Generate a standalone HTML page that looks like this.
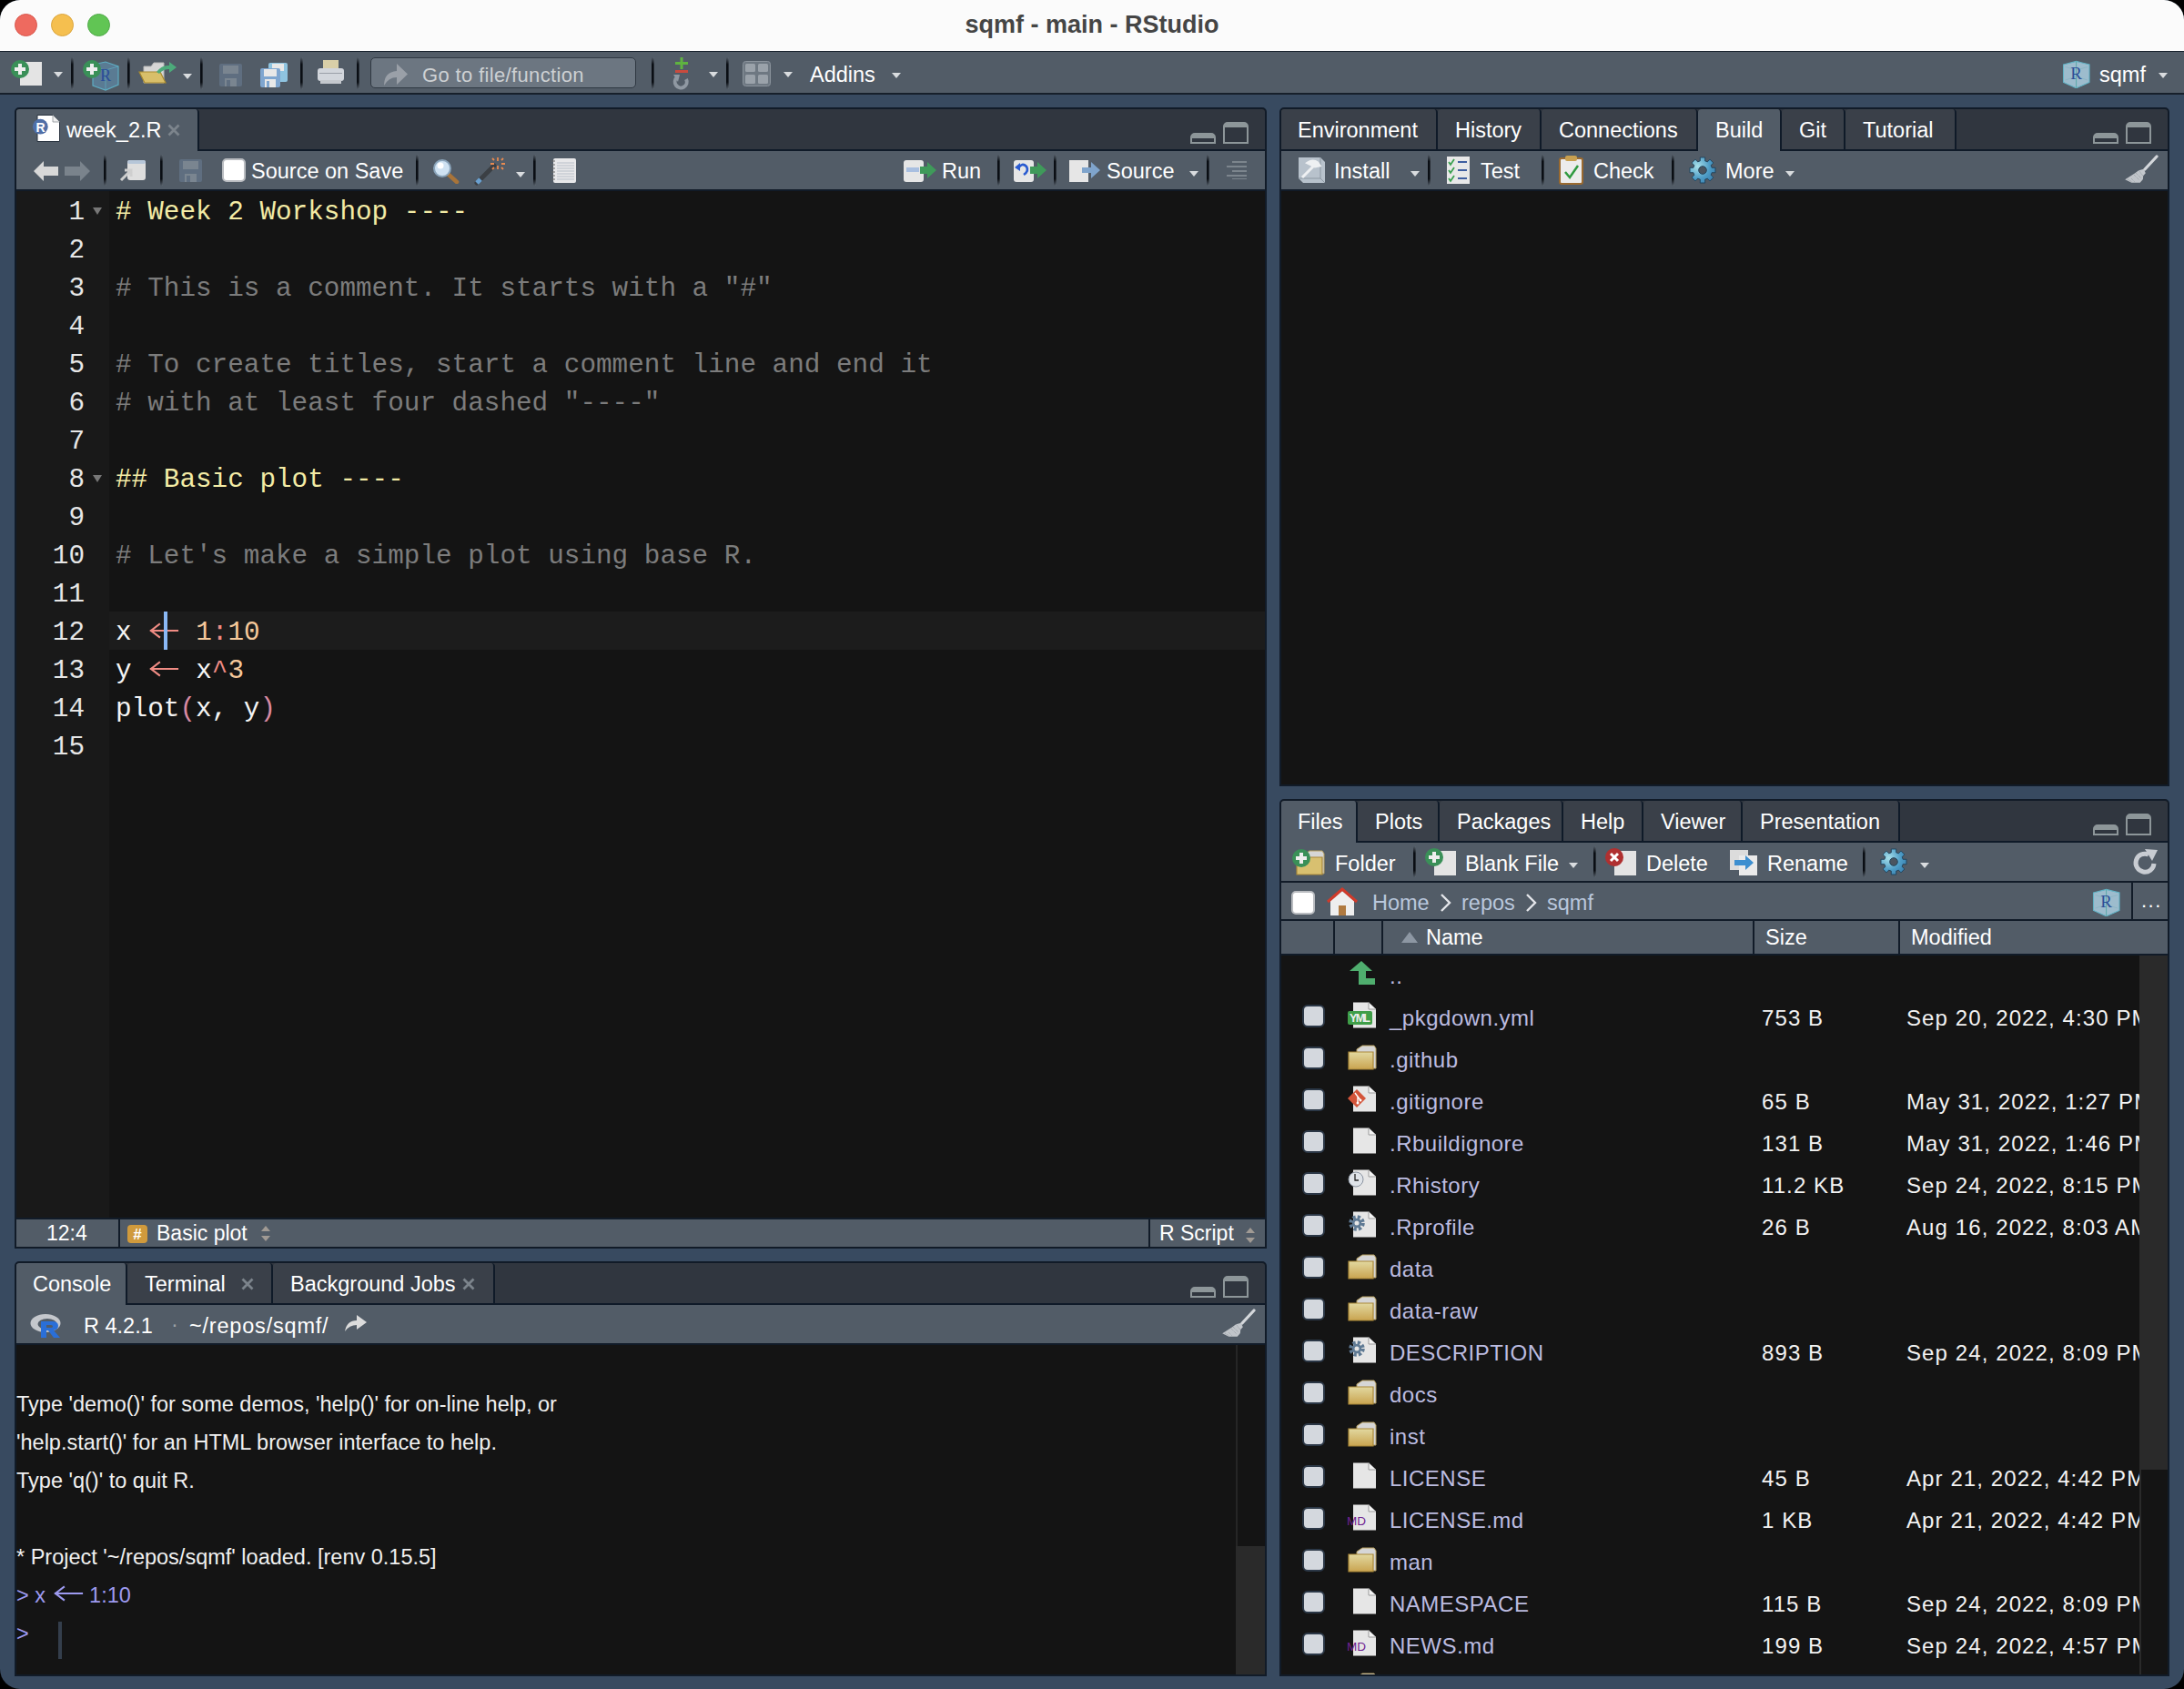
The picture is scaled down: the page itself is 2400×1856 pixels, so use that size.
<!DOCTYPE html>
<html><head><meta charset="utf-8">
<style>
*{margin:0;padding:0;box-sizing:border-box}
html,body{width:2400px;height:1856px;overflow:hidden;background:#000}
body{font-family:"Liberation Sans",sans-serif;font-size:23.5px;color:#fff}
.a{position:absolute}
#win{position:absolute;left:0;top:0;width:2400px;height:1856px;border-radius:22px;overflow:hidden;background:#384a60}
#title{left:0;top:0;width:2400px;height:56px;background:#fbfbfb}
#title .t{left:0;width:2400px;top:12px;text-align:center;font-weight:bold;font-size:27px;color:#454545}
.tl{width:25px;height:25px;border-radius:50%;top:15px}
#tb{left:0;top:56px;width:2400px;height:48px;background:#525c67;border-top:1.5px solid #17202b;border-bottom:2px solid #17202b}
.pane{border:2px solid #111b28;border-radius:5px 5px 0 0;overflow:hidden;background:#141414}
.tabbar{left:0;top:0;right:0;height:46px;background:#30363f;border-bottom:2px solid #0f1a28}
.tab{top:0;height:44px;background:#3a4049;border-radius:4px 4px 0 0;border-right:2px solid #0f1a28;color:#fff;line-height:46px;padding-left:19px;white-space:nowrap}
.tab.act{background:#525c67;height:46px;z-index:2}
.tool{left:0;right:0;background:#525c67;white-space:nowrap}
.sep{width:3px;background:linear-gradient(to bottom,rgba(10,14,20,0) 0%,#0a0e14 22%,#0a0e14 78%,rgba(10,14,20,0) 100%);border-right:1px solid rgba(120,130,140,0.25)}
.tx{white-space:nowrap;color:#fff}
.mono{font-family:"Liberation Mono",monospace}
.dd{width:0;height:0;border-left:5.5px solid transparent;border-right:5.5px solid transparent;border-top:6px solid #d9dcdf;margin-top:1px}
.ln{margin-top:3px;left:0;width:75px;text-align:right;font-family:"Liberation Mono",monospace;font-size:29.33px;line-height:42px;color:#e6e6e6}
.fold{left:84px;width:0;height:0;border-left:5.5px solid transparent;border-right:5.5px solid transparent;border-top:8px solid #777}
.code{margin-top:3px;left:109px;font-family:"Liberation Mono",monospace;font-size:29.33px;line-height:42px;color:#f4f4f4;white-space:pre}
.hd{color:#f3eba5}.cm{color:#7c7c7c}.nu{color:#f5c89a}.op{color:#f08c84}.pa{color:#d98aa3}
.minmax{width:86px;height:30px}
.minmax:before{box-sizing:border-box;content:"";position:absolute;left:0;top:12px;width:28px;height:12px;border:2px solid #8d9699;border-top-width:6px;border-radius:5px 5px 0 0}
.minmax:after{box-sizing:border-box;content:"";position:absolute;left:36px;top:0;width:28px;height:24px;border:2px solid #8d9699;border-top-width:6px;border-radius:5px 5px 0 0}
..code{margin-top:3px;left:12px;font-family:"Liberation Mono",monospace;font-size:29.33px;line-height:42px;white-space:pre}
.cb{width:25px;height:25px;background:#d4d8de;border:2px solid #2b3746;border-radius:6px}
.fn{font-size:24px;letter-spacing:0.5px;color:#bcbce0;white-space:nowrap;line-height:30px}
.fs{letter-spacing:1.1px;font-size:24px;color:#f2f2f2;white-space:nowrap;line-height:28px}
</style></head><body>
<div id="win">
  <div id="title" class="a">
    <div class="a tl" style="left:16px;background:#ee6a5f;border:1px solid #d9574d"></div>
    <div class="a tl" style="left:56px;background:#f5bf4f;border:1px solid #dba53f"></div>
    <div class="a tl" style="left:96px;background:#61c554;border:1px solid #51a94a"></div>
    <div class="a t">sqmf - main - RStudio</div>
  </div>
  <div id="tb" class="a">
    <!-- new file -->
    <svg class="a" style="left:10px;top:8px" width="40" height="32" viewBox="0 0 40 32">
      <rect x="12" y="3" width="24" height="26" fill="#e4e4e4"/>
      <circle cx="12" cy="11" r="10" fill="#3a9058"/>
      <rect x="6" y="9" width="12" height="4" fill="#eee"/><rect x="10" y="5" width="4" height="12" fill="#eee"/>
    </svg>
    <div class="a dd" style="left:59px;top:21px"></div>
    <div class="a sep" style="left:78px;top:6px;height:35px"></div>
    <!-- new project -->
    <svg class="a" style="left:90px;top:8px" width="42" height="36" viewBox="0 0 42 36">
      <path d="M12 6 L26 3 L40 8 L40 28 L26 34 L12 29 Z" fill="#5b7f98" stroke="#5fb5cc" stroke-width="1.2" opacity="0.9"/>
      <path d="M12 9 L26 12 L40 8 M26 12 L26 34" stroke="#5fb5cc" stroke-width="1" fill="none" opacity="0.6"/>
      <text x="20" y="24" font-family="Liberation Serif" font-size="18" fill="#2a4e9a">R</text>
      <circle cx="11" cy="11" r="10" fill="#3a9058"/>
      <rect x="5" y="9" width="12" height="4" fill="#eee"/><rect x="9" y="5" width="4" height="12" fill="#eee"/>
    </svg>
    <div class="a sep" style="left:140px;top:6px;height:35px"></div>
    <!-- open -->
    <svg class="a" style="left:152px;top:10px" width="44" height="28" viewBox="0 0 44 28">
      <path d="M6 6 L14 6 L17 2 L28 2 L28 24 L6 24 Z" fill="#d6d6d6" stroke="#b9b9b9" stroke-width="1"/>
      <path d="M1 12 L24 12 L30 24 L7 24 Z" fill="#d8bf6a" stroke="#a88a30" stroke-width="1.2"/>
      <path d="M20 12 Q26 4 34 5 L34 1 L42 7 L34 13 L34 9 Q27 9 23 14 Z" fill="#4caa7a"/>
    </svg>
    <div class="a dd" style="left:201px;top:23px"></div>
    <div class="a sep" style="left:220px;top:6px;height:35px"></div>
    <!-- save disabled -->
    <svg class="a" style="left:241px;top:13px" width="25" height="25" viewBox="0 0 25 25">
      <rect x="0" y="0" width="25" height="25" rx="2" fill="#5f6e80"/>
      <rect x="4" y="2" width="17" height="9" fill="#7a8590"/>
      <rect x="6" y="16" width="13" height="9" fill="#7a8590"/><rect x="8" y="18" width="4" height="7" fill="#5f6e80"/>
    </svg>
    <!-- save all -->
    <svg class="a" style="left:286px;top:11px" width="31" height="28" viewBox="0 0 31 28">
      <rect x="9" y="1" width="21" height="21" rx="2" fill="#8fc4e0"/>
      <rect x="13" y="2" width="13" height="8" fill="#e8e8e8"/>
      <rect x="0" y="7" width="22" height="21" rx="2" fill="#7fa6d0"/>
      <rect x="4" y="8" width="14" height="8" fill="#e8e8e8"/>
      <rect x="5" y="19" width="12" height="9" fill="#e8e8e8"/><rect x="7" y="21" width="3" height="7" fill="#7fa6d0"/>
    </svg>
    <div class="a sep" style="left:330px;top:6px;height:35px"></div>
    <!-- print -->
    <svg class="a" style="left:349px;top:9px" width="30" height="28" viewBox="0 0 30 28">
      <rect x="6" y="0" width="17" height="14" fill="#d9cfa8"/>
      <rect x="0" y="9" width="29" height="14" rx="3" fill="#d2d6dc"/>
      <rect x="3" y="22" width="23" height="4" fill="#c4c8cd"/>
      <rect x="2" y="14" width="25" height="1" fill="#9aa0a8"/>
    </svg>
    <div class="a sep" style="left:392px;top:6px;height:35px"></div>
    <!-- goto -->
    <div class="a" style="left:407px;top:6px;width:292px;height:34px;background:#6c7681;border:1.5px solid #2f3842;border-radius:5px"></div>
    <svg class="a" style="left:421px;top:12px" width="28" height="26" viewBox="0 0 28 26"><path d="M1 25 Q1 10 15 9 L15 1 L27 12.5 L15 24 L15 16 Q6 16 1 25 Z" fill="#9aa0a8"/></svg>
    <div class="a tx" style="left:464px;top:13px;color:#cdd0d3;font-size:22px;letter-spacing:0.35px">Go to file/function</div>
    <div class="a sep" style="left:716px;top:6px;height:35px"></div>
    <!-- git -->
    <svg class="a" style="left:738px;top:6px" width="22" height="36" viewBox="0 0 22 36">
      <rect x="4" y="5" width="14" height="3" fill="#5fb340"/><rect x="9.5" y="0" width="3" height="13" fill="#5fb340"/>
      <rect x="4" y="14" width="14" height="3" fill="#c84b3e"/>
      <path d="M16 24 A6.5 6.5 0 1 1 6 22" stroke="#8f98a2" stroke-width="4" fill="none"/>
      <path d="M2 19 L9 19 L7 27 Z" fill="#8f98a2"/>
    </svg>
    <div class="a dd" style="left:779px;top:21px"></div>
    <div class="a sep" style="left:798px;top:6px;height:35px"></div>
    <!-- grid -->
    <svg class="a" style="left:816px;top:10px" width="31" height="28" viewBox="0 0 31 28">
      <rect x="0.5" y="0.5" width="30" height="27" rx="3" fill="#6e7882" stroke="#8a939c"/>
      <rect x="3" y="3" width="11" height="9" rx="1.5" fill="#9aa2aa"/><rect x="17" y="3" width="11" height="9" rx="1.5" fill="#9aa2aa"/>
      <rect x="3" y="15" width="11" height="10" rx="1.5" fill="#9aa2aa"/><rect x="17" y="15" width="11" height="10" rx="1.5" fill="#9aa2aa"/>
    </svg>
    <div class="a dd" style="left:861px;top:21px"></div>
    <div class="a tx" style="left:890px;top:12px;font-size:23.5px">Addins</div>
    <div class="a dd" style="left:980px;top:22px"></div>
    <!-- right: project -->
    <svg class="a" style="left:2266px;top:8px" width="32" height="32" viewBox="0 0 32 32">
      <path d="M1.5 6 L15.6 2.4 L30 6 L30 25.5 L15.6 31.8 L1.5 25.5 Z" fill="#9dbccd" stroke="#62b3c6" stroke-width="1.1"/><path d="M15.6 2.4 L15.6 31.8" stroke="#5aa8a8" stroke-width="1"/><path d="M3.5 8.5 L15.6 12 L28 8.5 M3.5 23 L15.6 19 L28 23" stroke="#7fb0bf" stroke-width="0.8" fill="none" opacity="0.7"/><text x="9.2" y="21.5" font-family="Liberation Serif" font-size="19" fill="#2c4f96">R</text>
    </svg>
    <div class="a tx" style="left:2307px;top:12px;font-size:23.5px">sqmf</div>
    <div class="a dd" style="left:2372px;top:22px"></div>
  </div>

  <!-- SOURCE PANE -->
  <div id="src" class="a pane" style="left:16px;top:118px;width:1376px;height:1254px">
    <div class="a tabbar"></div>
    <div class="a tab act" style="left:-1px;width:202px">
      <svg class="a" style="left:18px;top:6px" width="34" height="32" viewBox="0 0 34 32">
        <path d="M6 0.5 L23 0.5 L30.5 8 L30.5 29.5 L6 29.5 Z" fill="#fff" stroke="#2a3440" stroke-width="1"/><path d="M23 0.5 L23 8 L30.5 8" fill="#f0f0f0" stroke="#8a8f96" stroke-width="0.8"/>
        <circle cx="9.3" cy="13.2" r="8.4" fill="#4f6fa8"/><text x="4.6" y="18.6" font-family="Liberation Sans" font-weight="bold" font-size="14" fill="#fff">R</text>
      </svg>
      <span class="a tx" style="left:56px;top:0">week_2.R</span>
      <svg class="a" style="left:167px;top:16px" width="14" height="14" viewBox="0 0 14 14"><path d="M1.5 1.5 L12.5 12.5 M12.5 1.5 L1.5 12.5" stroke="#7c848c" stroke-width="2.8"/></svg>
    </div>
    <div class="a minmax" style="left:1290px;top:14px"></div>
    <div class="a tool" style="top:46px;height:42px">
      <svg class="a" style="left:18px;top:10px" width="66" height="24" viewBox="0 0 66 24">
        <path d="M1 12 L12 1 L12 7 L28 7 L28 17 L12 17 L12 23 Z" fill="#d8d8d8"/>
        <path d="M63 12 L52 1 L52 7 L35 7 L35 17 L52 17 L52 23 Z" fill="#7a838c"/>
      </svg>
      <div class="a sep" style="left:96px;top:4px;height:34px"></div>
      <svg class="a" style="left:113px;top:10px" width="30" height="24" viewBox="0 0 30 24">
        <rect x="9" y="0" width="20" height="22" rx="3" fill="#dedede"/><rect x="9" y="0" width="20" height="4" rx="2" fill="#b6c6d8"/>
        <path d="M2 22 L12 12 M6 11 L13 11 L13 18" stroke="#cfcfcf" stroke-width="3" fill="none"/>
      </svg>
      <div class="a sep" style="left:158px;top:4px;height:34px"></div>
      <svg class="a" style="left:179px;top:9px" width="25" height="25" viewBox="0 0 25 25">
        <rect x="0" y="0" width="25" height="25" rx="2" fill="#5f6e80"/>
        <rect x="4" y="2" width="17" height="9" fill="#7a8590"/>
        <rect x="6" y="16" width="13" height="9" fill="#7a8590"/><rect x="8" y="18" width="4" height="7" fill="#5f6e80"/>
      </svg>
      <div class="a" style="left:226px;top:8px;width:26px;height:26px;background:#fff;border:2px solid #b9bcc0;border-radius:5px"></div>
      <span class="a tx" style="left:258px;top:9px">Source on Save</span>
      <div class="a sep" style="left:439px;top:4px;height:34px"></div>
      <svg class="a" style="left:457px;top:8px" width="30" height="28" viewBox="0 0 30 28">
        <path d="M16 16 L27 26" stroke="#a8743a" stroke-width="4.5" stroke-linecap="round"/>
        <circle cx="11" cy="11" r="9" fill="#cfe2f2" stroke="#8aa4ba" stroke-width="2"/>
        <circle cx="9" cy="8" r="3.5" fill="#fff"/>
      </svg>
      <svg class="a" style="left:503px;top:6px" width="36" height="32" viewBox="0 0 36 32">
        <path d="M3 29 L22 10" stroke="#3b3f44" stroke-width="5" stroke-linecap="round"/>
        <path d="M3 29 L7 25" stroke="#6aa0d0" stroke-width="5"/>
        <path d="M26 1 L26 5 M26 10 L26 14 M18 8 L22 8 M30 8 L34 8 M20 2 L22 4 M32 2 L30 4 M20 14 L22 12 M32 14 L30 12" stroke="#e88a50" stroke-width="1.8"/>
      </svg>
      <div class="a dd" style="left:549px;top:22px"></div>
      <div class="a sep" style="left:568px;top:4px;height:34px"></div>
      <svg class="a" style="left:587px;top:7px" width="30" height="30" viewBox="0 0 30 30">
        <rect x="3" y="1" width="25" height="27" rx="2" fill="#e8e8ea"/>
        <path d="M7 6 H26 M7 9 H26 M7 12 H26 M7 15 H26 M7 18 H26 M7 21 H26 M7 24 H26" stroke="#b8bfc8" stroke-width="1"/>
        <path d="M1 4 H5 M1 8 H5 M1 12 H5 M1 16 H5 M1 20 H5 M1 24 H5" stroke="#666" stroke-width="1.2"/>
      </svg>
      <!-- run -->
      <svg class="a" style="left:974px;top:9px" width="40" height="26" viewBox="0 0 40 26">
        <rect x="1" y="1" width="22" height="24" rx="3" fill="#e6e6e6"/>
        <rect x="4" y="9" width="14" height="5" fill="#a9bfe0"/>
        <path d="M19 8 L27 8 L27 3 L37 12 L27 21 L27 16 L19 16 Z" fill="#3f9a5a"/>
      </svg>
      <span class="a tx" style="left:1017px;top:9px">Run</span>
      <div class="a sep" style="left:1078px;top:4px;height:34px"></div>
      <svg class="a" style="left:1095px;top:9px" width="40" height="26" viewBox="0 0 40 26">
        <rect x="1" y="1" width="22" height="24" rx="3" fill="#e6e6e6"/>
        <path d="M6 10 Q10 3 15 8 Q18 13 12 17" stroke="#2a5bd0" stroke-width="2.6" fill="none"/><path d="M2 9 L8 4 L8 13 Z" fill="#2a5bd0"/>
        <path d="M19 8 L27 8 L27 3 L37 12 L27 21 L27 16 L19 16 Z" fill="#3f9a5a"/>
      </svg>
      <div class="a sep" style="left:1140px;top:4px;height:34px"></div>
      <svg class="a" style="left:1156px;top:9px" width="40" height="26" viewBox="0 0 40 26">
        <rect x="1" y="1" width="21" height="24" fill="#e6e6e6"/>
        <path d="M15 9 L25 9 L25 3 L35 12 L25 21 L25 15 L15 15 Z" fill="#7fa4cc"/>
      </svg>
      <span class="a tx" style="left:1198px;top:9px">Source</span>
      <div class="a dd" style="left:1289px;top:21px"></div>
      <div class="a sep" style="left:1308px;top:4px;height:34px"></div>
      <svg class="a" style="left:1330px;top:11px" width="24" height="20" viewBox="0 0 24 20">
        <path d="M6 1 H22 M0 6 H22 M6 11 H22 M0 16 H22 M6 20 H22" stroke="#8a939b" stroke-width="1.6"/>
      </svg>
    </div>
    <div class="a" style="left:0;top:88px;width:1376px;height:2px;background:#111b28"></div>
    <div class="a" style="left:0;top:90px;width:102px;height:1128px;background:#191919"></div>
    <div class="a" style="left:102px;top:552px;width:1270px;height:42px;background:#1c1c1c"></div>
        <div class="a ln" style="top:90px">1</div>
<div class="a fold" style="top:108px"></div>
<div class="a code" style="top:90px"><span class="hd"># Week 2 Workshop ----</span></div>
<div class="a ln" style="top:132px">2</div>
<div class="a ln" style="top:174px">3</div>
<div class="a code" style="top:174px"><span class="cm"># This is a comment. It starts with a "#"</span></div>
<div class="a ln" style="top:216px">4</div>
<div class="a ln" style="top:258px">5</div>
<div class="a code" style="top:258px"><span class="cm"># To create titles, start a comment line and end it</span></div>
<div class="a ln" style="top:300px">6</div>
<div class="a code" style="top:300px"><span class="cm"># with at least four dashed "----"</span></div>
<div class="a ln" style="top:342px">7</div>
<div class="a ln" style="top:384px">8</div>
<div class="a fold" style="top:402px"></div>
<div class="a code" style="top:384px"><span class="hd">## Basic plot ----</span></div>
<div class="a ln" style="top:426px">9</div>
<div class="a ln" style="top:468px">10</div>
<div class="a code" style="top:468px"><span class="cm"># Let's make a simple plot using base R.</span></div>
<div class="a ln" style="top:510px">11</div>
<div class="a ln" style="top:552px">12</div>
<div class="a code" style="top:552px">x <svg width="35" height="20" viewBox="0 0 35 20" style="vertical-align:0.5px;margin:0 0.2px"><path d="M4 10 H33 M13 3 L4 10 L13 17" stroke="#f08c84" stroke-width="2.2" fill="none" stroke-linecap="square"/></svg> <span class="nu">1</span><span class="op">:</span><span class="nu">10</span></div>
<div class="a ln" style="top:594px">13</div>
<div class="a code" style="top:594px">y <svg width="35" height="20" viewBox="0 0 35 20" style="vertical-align:0.5px;margin:0 0.2px"><path d="M4 10 H33 M13 3 L4 10 L13 17" stroke="#f08c84" stroke-width="2.2" fill="none" stroke-linecap="square"/></svg> x<span class="op">^</span><span class="nu">3</span></div>
<div class="a ln" style="top:636px">14</div>
<div class="a code" style="top:636px">plot<span class="pa">(</span>x, y<span class="pa">)</span></div>
<div class="a ln" style="top:678px">15</div>
    <div class="a" style="left:162px;top:552px;width:4px;height:42px;background:#8ab8f5"></div>
    <div class="a" style="left:0;top:1218px;width:1376px;height:2px;background:#111b28"></div>
    <div class="a tool" style="top:1220px;height:30px">
      <span class="a tx" style="left:33px;top:2px;font-size:23px">12:4</span>
      <div class="a" style="left:112px;top:0;width:2px;height:30px;background:#111b28"></div>
      <div class="a" style="left:122px;top:6px;width:22px;height:20px;background:#d09a3c;border-radius:4px;color:#fff;font-size:17px;line-height:21px;text-align:center;font-weight:bold">#</div>
      <span class="a tx" style="left:154px;top:2px;font-size:23px">Basic plot</span>
      <svg class="a" style="left:268px;top:6px" width="12" height="20" viewBox="0 0 12 20"><path d="M1 7 L6 1 L11 7 Z M1 12 L6 18 L11 12 Z" fill="#a09a94"/></svg>
      <div class="a" style="left:1244px;top:0;width:2px;height:30px;background:#111b28"></div>
      <span class="a tx" style="left:1256px;top:2px;font-size:23px">R Script</span>
      <svg class="a" style="left:1350px;top:8px" width="12" height="20" viewBox="0 0 12 20"><path d="M1 7 L6 1 L11 7 Z M1 12 L6 18 L11 12 Z" fill="#a09a94"/></svg>
    </div>
  </div>

  <!-- CONSOLE PANE -->
  <div id="con" class="a pane" style="left:16px;top:1386px;width:1376px;height:456px">
    <div class="a tabbar"></div>
    <div class="a tab act" style="left:-1px;width:123px">Console</div>
    <div class="a tab" style="left:122px;width:160px">Terminal<svg class="a" style="left:125px;top:16px" width="14" height="14" viewBox="0 0 14 14"><path d="M1.5 1.5 L12.5 12.5 M12.5 1.5 L1.5 12.5" stroke="#7c848c" stroke-width="2.8"/></svg></div>
    <div class="a tab" style="left:282px;width:244px">Background Jobs<svg class="a" style="left:208px;top:16px" width="14" height="14" viewBox="0 0 14 14"><path d="M1.5 1.5 L12.5 12.5 M12.5 1.5 L1.5 12.5" stroke="#7c848c" stroke-width="2.8"/></svg></div>
    <div class="a minmax" style="left:1290px;top:14px"></div>
    <div class="a tool" style="top:46px;height:42px">
      <svg class="a" style="left:15px;top:9px" width="36" height="28" viewBox="0 0 36 28">
        <ellipse cx="17" cy="11" rx="16.5" ry="10" fill="#c4c7cc"/>
        <ellipse cx="19" cy="12" rx="10.5" ry="6" fill="#525c67"/>
        <path d="M12 9 L24 9 Q31 9 31 14 Q31 18 26 19 L33 27 L26 27 L20 19 L18 19 L18 27 L12 27 Z M18 13 L18 16 L23 16 Q25 16 25 14.5 Q25 13 23 13 Z" fill="#2a6fd8"/>
      </svg>
      <span class="a tx" style="left:74px;top:10px">R 4.2.1</span>
      <span class="a" style="left:170px;top:8px;color:#9aa0a6">&#183;</span>
      <span class="a tx" style="left:190px;top:10px;letter-spacing:0.8px">~/repos/sqmf/</span>
      <svg class="a" style="left:360px;top:10px" width="26" height="22" viewBox="0 0 26 22">
        <path d="M1 19 Q3 7 14 7 L14 1 L25 9 L14 17 L14 12 Q6 12 1 19 Z" fill="#dcdcdc"/>
      </svg>
      <svg class="a" style="left:1324px;top:4px" width="40" height="34" viewBox="0 0 40 34"><path d="M36 2 L23 16" stroke="#d4d7db" stroke-width="3.2" stroke-linecap="round"/>
        <path d="M16.2 17.3 L21.8 15.8 L23.8 20.2 L21.2 23.2 Z" fill="#c4c8cd"/>
        <path d="M11.8 20.5 L16.2 17.3 L21.2 23.2 L20.9 27 L17.7 30.8 L8.3 30.8 L1.2 27.3 Z" fill="#c0c4c9"/>
        <path d="M13 20 L19 26 M11 22 L17 28 M4 27 L9 30 M8 26 L12 30" stroke="#8e959c" stroke-width="0.8" stroke-dasharray="1 1"/></svg>
    </div>
    <div class="a" style="left:0;top:88px;width:1376px;height:2px;background:#111b28"></div>
    <div class="a" style="left:1340px;top:90px;width:2px;height:222px;background:#262626"></div>
    <div class="a" style="left:1340px;top:311px;width:32px;height:141px;background:#2a2a2a"></div>
    <div class="a" style="left:0;top:90px;width:1341px;height:366px;overflow:hidden">
    <div class="a ccode" style="top:-32px;color:#f0f0f0">'citation()' on how to cite R or R packages in publications.</div>
<div class="a ccode" style="top:52px;color:#f0f0f0">Type 'demo()' for some demos, 'help()' for on-line help, or</div>
<div class="a ccode" style="top:94px;color:#f0f0f0">'help.start()' for an HTML browser interface to help.</div>
<div class="a ccode" style="top:136px;color:#f0f0f0">Type 'q()' to quit R.</div>
<div class="a ccode" style="top:220px;color:#f0f0f0">* Project '~/repos/sqmf' loaded. [renv 0.15.5]</div>
<div class="a ccode" style="top:262px;color:#9d9af0">&gt; x <svg width="35" height="20" viewBox="0 0 35 20" style="vertical-align:0.5px"><path d="M4 10 H33 M13 3 L4 10 L13 17" stroke="#9d9af0" stroke-width="2.2" fill="none" stroke-linecap="square"/></svg> 1:10</div>
<div class="a ccode" style="top:304px;color:#9d9af0">&gt; </div>
<div class="a" style="left:46px;top:304px;width:4px;height:41px;background:#343e4c"></div>
    </div>
  </div>

  <!-- ENV PANE -->
  <div id="env" class="a pane" style="left:1406px;top:118px;width:978px;height:746px">
    <div class="a tabbar"></div>
    <div class="a tab" style="left:-1px;width:173px">Environment</div>
    <div class="a tab" style="left:172px;width:114px">History</div>
    <div class="a tab" style="left:286px;width:172px">Connections</div>
    <div class="a tab act" style="left:458px;width:92px">Build</div>
    <div class="a tab" style="left:550px;width:70px">Git</div>
    <div class="a tab" style="left:620px;width:122px">Tutorial</div>
    <div class="a minmax" style="left:892px;top:14px"></div>
    <div class="a tool" style="top:46px;height:42px">
      <svg class="a" style="left:15px;top:4px" width="36" height="34" viewBox="0 0 36 34">
        <path d="M4 3 L28 3 L33 8 L33 31 L9 31 L4 26 Z" fill="#b8c2cc"/><path d="M28 3 L28 26 L33 31 M4 26 L28 26" stroke="#8c97a2" fill="none"/>
        <path d="M8 25 L20 13 M14 9 Q20 5 25 9 L27 12 L22 13 Z" stroke="#eef0f2" stroke-width="3" fill="#eef0f2"/>
      </svg>
      <span class="a tx" style="left:58px;top:9px">Install</span>
      <div class="a dd" style="left:142px;top:21px"></div>
      <div class="a sep" style="left:161px;top:4px;height:34px"></div>
      <svg class="a" style="left:182px;top:6px" width="26" height="30" viewBox="0 0 26 30">
        <rect x="0" y="0" width="25" height="30" fill="#e8e8e8"/>
        <path d="M2 6 L4 9 L8 3 M2 15 L4 18 L8 12 M2 24 L4 27 L8 21" stroke="#3aa050" stroke-width="1.8" fill="none"/>
        <path d="M12 6 H22 M12 15 H22 M12 24 H22" stroke="#3f5fa0" stroke-width="2"/>
      </svg>
      <span class="a tx" style="left:219px;top:9px">Test</span>
      <div class="a sep" style="left:286px;top:4px;height:34px"></div>
      <svg class="a" style="left:305px;top:3px" width="28" height="34" viewBox="0 0 28 34">
        <rect x="1" y="5" width="25" height="28" rx="2" fill="#ececec" stroke="#9a6a30" stroke-width="2"/>
        <rect x="7" y="2" width="13" height="6" rx="2" fill="#c8a050"/>
        <path d="M7 20 L12 26 L21 13" stroke="#2f9a40" stroke-width="2.5" fill="none"/>
      </svg>
      <span class="a tx" style="left:343px;top:9px">Check</span>
      <div class="a sep" style="left:429px;top:4px;height:34px"></div>
      <svg class="a" style="left:448px;top:6px" width="30" height="30" viewBox="0 0 30 30"><defs><radialGradient id="GG0" cx="0.3" cy="0.35" r="0.8"><stop offset="0" stop-color="#a8e0ea"/><stop offset="0.6" stop-color="#4d9cc6"/><stop offset="1" stop-color="#3a7fae"/></radialGradient></defs><path d="M24.70 10.98 L25.14 12.28 L29.04 12.27 L29.04 17.73 L25.14 17.72 L24.70 19.02 L24.09 20.25 L26.86 23.00 L23.00 26.86 L20.25 24.09 L19.02 24.70 L17.72 25.14 L17.73 29.04 L12.27 29.04 L12.28 25.14 L10.98 24.70 L9.75 24.09 L7.00 26.86 L3.14 23.00 L5.91 20.25 L5.30 19.02 L4.86 17.72 L0.96 17.73 L0.96 12.27 L4.86 12.28 L5.30 10.98 L5.91 9.75 L3.14 7.00 L7.00 3.14 L9.75 5.91 L10.98 5.30 L12.28 4.86 L12.27 0.96 L17.73 0.96 L17.72 4.86 L19.02 5.30 L20.25 5.91 L23.00 3.14 L26.86 7.00 L24.09 9.75 Z" fill="url(#GG0)" stroke="#23465e" stroke-width="1" stroke-linejoin="round"/><circle cx="15" cy="15" r="4.3" fill="#4a5560" stroke="#23465e" stroke-width="1"/></svg>
      <span class="a tx" style="left:488px;top:9px">More</span>
      <div class="a dd" style="left:554px;top:21px"></div>
      <svg class="a" style="left:926px;top:4px" width="40" height="34" viewBox="0 0 40 34"><path d="M36 2 L23 16" stroke="#d4d7db" stroke-width="3.2" stroke-linecap="round"/>
        <path d="M16.2 17.3 L21.8 15.8 L23.8 20.2 L21.2 23.2 Z" fill="#c4c8cd"/>
        <path d="M11.8 20.5 L16.2 17.3 L21.2 23.2 L20.9 27 L17.7 30.8 L8.3 30.8 L1.2 27.3 Z" fill="#c0c4c9"/>
        <path d="M13 20 L19 26 M11 22 L17 28 M4 27 L9 30 M8 26 L12 30" stroke="#8e959c" stroke-width="0.8" stroke-dasharray="1 1"/></svg>
    </div>
    <div class="a" style="left:0;top:88px;width:979px;height:2px;background:#111b28"></div>
  </div>

  <!-- FILES PANE -->
  <div id="files" class="a pane" style="left:1406px;top:878px;width:978px;height:964px">
    <div class="a tabbar"></div>
    <div class="a tab act" style="left:-1px;width:85px">Files</div>
    <div class="a tab" style="left:84px;width:90px">Plots</div>
    <div class="a tab" style="left:174px;width:136px">Packages</div>
    <div class="a tab" style="left:310px;width:88px">Help</div>
    <div class="a tab" style="left:398px;width:109px">Viewer</div>
    <div class="a tab" style="left:507px;width:173px">Presentation</div>
    <div class="a minmax" style="left:892px;top:14px"></div>
    <div class="a tool" style="top:46px;height:42px">
      <svg class="a" style="left:11px;top:6px" width="40" height="30" viewBox="0 0 40 30">
        <path d="M14 7 L20 3 L34 3 L36 6 L36 28 L14 28 Z" fill="#d6d6d6" stroke="#b8a060"/>
        <path d="M6 10 L34 10 L34 29 L6 29 Z" fill="#d8c070" stroke="#a98838" stroke-width="1.2"/>
        <circle cx="11" cy="11" r="10" fill="#3a9058"/><rect x="5" y="9" width="12" height="4" fill="#eee"/><rect x="9" y="5" width="4" height="12" fill="#eee"/>
      </svg>
      <span class="a tx" style="left:59px;top:10px">Folder</span>
      <div class="a sep" style="left:145px;top:4px;height:34px"></div>
      <svg class="a" style="left:158px;top:6px" width="36" height="30" viewBox="0 0 36 30">
        <rect x="10" y="3" width="24" height="27" fill="#e4e4e4"/><circle cx="10" cy="10" r="10" fill="#3a9058"/><rect x="4" y="8" width="12" height="4" fill="#eee"/><rect x="8" y="4" width="4" height="12" fill="#eee"/>
      </svg>
      <span class="a tx" style="left:202px;top:10px">Blank File</span>
      <div class="a dd" style="left:316px;top:21px"></div>
      <div class="a sep" style="left:343px;top:4px;height:34px"></div>
      <svg class="a" style="left:356px;top:6px" width="36" height="30" viewBox="0 0 36 30">
        <rect x="10" y="3" width="24" height="27" fill="#e4e4e4"/>
        <circle cx="10" cy="10" r="10" fill="#b03030"/><path d="M6 6 L14 14 M14 6 L6 14" stroke="#fff" stroke-width="3"/>
      </svg>
      <span class="a tx" style="left:401px;top:10px">Delete</span>
      <svg class="a" style="left:492px;top:7px" width="34" height="30" viewBox="0 0 34 30">
        <rect x="1" y="1" width="20" height="22" fill="#dcdcdc"/><rect x="11" y="7" width="20" height="22" fill="#eaeaea"/>
        <path d="M6 12 L18 12 L18 7 L27 15 L18 23 L18 18 L6 18 Z" fill="#3d8fd0"/>
      </svg>
      <span class="a tx" style="left:534px;top:10px">Rename</span>
      <div class="a sep" style="left:639px;top:4px;height:34px"></div>
      <svg class="a" style="left:658px;top:6px" width="30" height="30" viewBox="0 0 30 30"><defs><radialGradient id="GG1" cx="0.3" cy="0.35" r="0.8"><stop offset="0" stop-color="#a8e0ea"/><stop offset="0.6" stop-color="#4d9cc6"/><stop offset="1" stop-color="#3a7fae"/></radialGradient></defs><path d="M24.70 10.98 L25.14 12.28 L29.04 12.27 L29.04 17.73 L25.14 17.72 L24.70 19.02 L24.09 20.25 L26.86 23.00 L23.00 26.86 L20.25 24.09 L19.02 24.70 L17.72 25.14 L17.73 29.04 L12.27 29.04 L12.28 25.14 L10.98 24.70 L9.75 24.09 L7.00 26.86 L3.14 23.00 L5.91 20.25 L5.30 19.02 L4.86 17.72 L0.96 17.73 L0.96 12.27 L4.86 12.28 L5.30 10.98 L5.91 9.75 L3.14 7.00 L7.00 3.14 L9.75 5.91 L10.98 5.30 L12.28 4.86 L12.27 0.96 L17.73 0.96 L17.72 4.86 L19.02 5.30 L20.25 5.91 L23.00 3.14 L26.86 7.00 L24.09 9.75 Z" fill="url(#GG1)" stroke="#23465e" stroke-width="1" stroke-linejoin="round"/><circle cx="15" cy="15" r="4.3" fill="#4a5560" stroke="#23465e" stroke-width="1"/></svg>
      <div class="a dd" style="left:702px;top:21px"></div>
      <svg class="a" style="left:935px;top:7px" width="30" height="30" viewBox="0 0 30 30">
        <path d="M24 16 A10 10 0 1 1 18 6" stroke="#c8ccd2" stroke-width="5" fill="none"/>
        <path d="M14 0 L28 1 L22 13 Z" fill="#c8ccd2"/>
      </svg>
    </div>
    <div class="a" style="left:0;top:88px;width:979px;height:2px;background:#111b28"></div>
    <div class="a tool" style="top:90px;height:40px">
      <div class="a" style="left:11px;top:9px;width:26px;height:26px;background:#fff;border:2px solid #b9bcc0;border-radius:5px"></div>
      <svg class="a" style="left:49px;top:5px" width="36" height="32" viewBox="0 0 36 32">
        <path d="M5 15 L18 4 L31 15 L31 31 L5 31 Z" fill="#eeeeee"/>
        <rect x="14" y="20" width="8" height="11" fill="#b07a40"/>
        <path d="M2 16 L18 2 L34 16" stroke="#d03a2a" stroke-width="3" fill="none"/>
      </svg>
      <span class="a tx" style="left:100px;top:9px;color:#b9c7dc">Home</span>
      <svg class="a" style="left:174px;top:11px" width="14" height="22" viewBox="0 0 14 22"><path d="M2 2 L11 11 L2 20" stroke="#e4e6ea" stroke-width="2.4" fill="none"/></svg>
      <span class="a tx" style="left:198px;top:9px;color:#b9c7dc">repos</span>
      <svg class="a" style="left:268px;top:11px" width="14" height="22" viewBox="0 0 14 22"><path d="M2 2 L11 11 L2 20" stroke="#e4e6ea" stroke-width="2.4" fill="none"/></svg>
      <span class="a tx" style="left:292px;top:9px;color:#b9c7dc">sqmf</span>
      <svg class="a" style="left:891px;top:5px" width="32" height="32" viewBox="0 0 32 32"><path d="M1.5 6 L15.6 2.4 L30 6 L30 25.5 L15.6 31.8 L1.5 25.5 Z" fill="#9dbccd" stroke="#62b3c6" stroke-width="1.1"/><path d="M15.6 2.4 L15.6 31.8" stroke="#5aa8a8" stroke-width="1"/><path d="M3.5 8.5 L15.6 12 L28 8.5 M3.5 23 L15.6 19 L28 23" stroke="#7fb0bf" stroke-width="0.8" fill="none" opacity="0.7"/><text x="9.2" y="21.5" font-family="Liberation Serif" font-size="19" fill="#2c4f96">R</text></svg>
      <div class="a" style="left:934px;top:0;width:2px;height:40px;background:#111b28"></div>
      <span class="a tx" style="left:945px;top:7px;font-size:22px;letter-spacing:1.5px">...</span>
    </div>
    <div class="a" style="left:0;top:130px;width:979px;height:2px;background:#111b28"></div>
    <div class="a tool" style="top:132px;height:36px">
      <div class="a" style="left:57px;top:0;width:2px;height:36px;background:#111b28"></div>
      <div class="a" style="left:110px;top:0;width:2px;height:36px;background:#111b28"></div>
      <div class="a" style="left:518px;top:0;width:2px;height:36px;background:#111b28"></div>
      <div class="a" style="left:678px;top:0;width:2px;height:36px;background:#111b28"></div>
      <svg class="a" style="left:131px;top:11px" width="20" height="14" viewBox="0 0 20 14"><path d="M10 1 L19 13 L1 13 Z" fill="#8d97a3"/></svg>
      <span class="a tx" style="left:159px;top:5px">Name</span>
      <span class="a tx" style="left:532px;top:5px">Size</span>
      <span class="a tx" style="left:692px;top:5px">Modified</span>
    </div>
    <div class="a" style="left:0;top:168px;width:979px;height:2px;background:#111b28"></div>
    <div class="a" style="left:0;top:170px;width:943px;height:792px;overflow:hidden">
      <svg class="a" style="left:73px;top:5px;overflow:visible" width="32" height="30" viewBox="0 0 32 30"><path d="M15 1 L27 12 L20 12 L20 20 L30 20 L30 27 L12 27 L12 12 L2 12 Z" fill="#4fae6e"/></svg>
<div class="a fn" style="left:119px;top:8px">..</div>
<div class="a cb" style="left:23px;top:54px"></div>
<svg class="a" style="left:73px;top:51px;overflow:visible" width="32" height="30" viewBox="0 0 32 30"><path d="M6 0.5 L23 0.5 L31 8 L31 28.5 L6 28.5 Z" fill="#e6e6e6"/><path d="M23 0.5 L23 8 L31 8" fill="#f4f4f4" stroke="#9a9a9a" stroke-width="1"/><rect x="0" y="10" width="27" height="15" rx="2" fill="#3f9e48"/><text x="2" y="22" font-family="Liberation Sans" font-weight="bold" font-size="12.5" fill="#eee" textLength="23">YML</text></svg>
<div class="a fn" style="left:119px;top:54px">_pkgdown.yml</div>
<div class="a fs" style="left:528px;top:55px">753 B</div>
<div class="a fs" style="left:687px;top:55px">Sep 20, 2022, 4:30 PM</div>
<div class="a cb" style="left:23px;top:100px"></div>
<svg class="a" style="left:73px;top:97px;overflow:visible" width="32" height="30" viewBox="0 0 32 30"><defs><linearGradient id="fg" x1="0" y1="0" x2="0" y2="1"><stop offset="0" stop-color="#e2d8a0"/><stop offset="1" stop-color="#c9a450"/></linearGradient></defs><path d="M10 6 L16 2 L29 2 L31 5 L31 27 L10 27 Z" fill="#d6d6d6" stroke="#b8a060" stroke-width="1"/><path d="M1 9 L28 9 L28 28 L1 28 Z" fill="url(#fg)" stroke="#a98838" stroke-width="1.2"/></svg>
<div class="a fn" style="left:119px;top:100px">.github</div>
<div class="a cb" style="left:23px;top:146px"></div>
<svg class="a" style="left:73px;top:143px;overflow:visible" width="32" height="30" viewBox="0 0 32 30"><path d="M6 0.5 L23 0.5 L31 8 L31 28.5 L6 28.5 Z" fill="#e6e6e6"/><path d="M23 0.5 L23 8 L31 8" fill="#f4f4f4" stroke="#9a9a9a" stroke-width="1"/><path d="M10 4 L20 14 L10 24 L0 14 Z" fill="#d4553a"/><path d="M8 8 L11 12 L11 19 M11 12 L14 16" stroke="#fff" stroke-width="1.4" fill="none"/><circle cx="11" cy="19" r="1.5" fill="#fff"/><circle cx="14" cy="16" r="1.5" fill="#fff"/></svg>
<div class="a fn" style="left:119px;top:146px">.gitignore</div>
<div class="a fs" style="left:528px;top:147px">65 B</div>
<div class="a fs" style="left:687px;top:147px">May 31, 2022, 1:27 PM</div>
<div class="a cb" style="left:23px;top:192px"></div>
<svg class="a" style="left:73px;top:189px;overflow:visible" width="32" height="30" viewBox="0 0 32 30"><path d="M6 0.5 L23 0.5 L31 8 L31 28.5 L6 28.5 Z" fill="#e6e6e6"/><path d="M23 0.5 L23 8 L31 8" fill="#f4f4f4" stroke="#9a9a9a" stroke-width="1"/></svg>
<div class="a fn" style="left:119px;top:192px">.Rbuildignore</div>
<div class="a fs" style="left:528px;top:193px">131 B</div>
<div class="a fs" style="left:687px;top:193px">May 31, 2022, 1:46 PM</div>
<div class="a cb" style="left:23px;top:238px"></div>
<svg class="a" style="left:73px;top:235px;overflow:visible" width="32" height="30" viewBox="0 0 32 30"><path d="M6 0.5 L23 0.5 L31 8 L31 28.5 L6 28.5 Z" fill="#e6e6e6"/><path d="M23 0.5 L23 8 L31 8" fill="#f4f4f4" stroke="#9a9a9a" stroke-width="1"/><circle cx="9" cy="11" r="8" fill="#dfe3e8" stroke="#8a93a0" stroke-width="1"/><path d="M8 5 L8 12 L12 12" stroke="#222" stroke-width="1.3" fill="none"/></svg>
<div class="a fn" style="left:119px;top:238px">.Rhistory</div>
<div class="a fs" style="left:528px;top:239px">11.2 KB</div>
<div class="a fs" style="left:687px;top:239px">Sep 24, 2022, 8:15 PM</div>
<div class="a cb" style="left:23px;top:284px"></div>
<svg class="a" style="left:73px;top:281px;overflow:visible" width="32" height="30" viewBox="0 0 32 30"><path d="M6 0.5 L23 0.5 L31 8 L31 28.5 L6 28.5 Z" fill="#e6e6e6"/><path d="M23 0.5 L23 8 L31 8" fill="#f4f4f4" stroke="#9a9a9a" stroke-width="1"/><circle cx="10" cy="13" r="6.5" fill="none" stroke="#5f7a94" stroke-width="4.5" stroke-dasharray="3 2.1"/><circle cx="10" cy="13" r="5.2" fill="#5f7a94"/><circle cx="10" cy="13" r="2.5" fill="#e6e6e6"/></svg>
<div class="a fn" style="left:119px;top:284px">.Rprofile</div>
<div class="a fs" style="left:528px;top:285px">26 B</div>
<div class="a fs" style="left:687px;top:285px">Aug 16, 2022, 8:03 AM</div>
<div class="a cb" style="left:23px;top:330px"></div>
<svg class="a" style="left:73px;top:327px;overflow:visible" width="32" height="30" viewBox="0 0 32 30"><defs><linearGradient id="fg" x1="0" y1="0" x2="0" y2="1"><stop offset="0" stop-color="#e2d8a0"/><stop offset="1" stop-color="#c9a450"/></linearGradient></defs><path d="M10 6 L16 2 L29 2 L31 5 L31 27 L10 27 Z" fill="#d6d6d6" stroke="#b8a060" stroke-width="1"/><path d="M1 9 L28 9 L28 28 L1 28 Z" fill="url(#fg)" stroke="#a98838" stroke-width="1.2"/></svg>
<div class="a fn" style="left:119px;top:330px">data</div>
<div class="a cb" style="left:23px;top:376px"></div>
<svg class="a" style="left:73px;top:373px;overflow:visible" width="32" height="30" viewBox="0 0 32 30"><defs><linearGradient id="fg" x1="0" y1="0" x2="0" y2="1"><stop offset="0" stop-color="#e2d8a0"/><stop offset="1" stop-color="#c9a450"/></linearGradient></defs><path d="M10 6 L16 2 L29 2 L31 5 L31 27 L10 27 Z" fill="#d6d6d6" stroke="#b8a060" stroke-width="1"/><path d="M1 9 L28 9 L28 28 L1 28 Z" fill="url(#fg)" stroke="#a98838" stroke-width="1.2"/></svg>
<div class="a fn" style="left:119px;top:376px">data-raw</div>
<div class="a cb" style="left:23px;top:422px"></div>
<svg class="a" style="left:73px;top:419px;overflow:visible" width="32" height="30" viewBox="0 0 32 30"><path d="M6 0.5 L23 0.5 L31 8 L31 28.5 L6 28.5 Z" fill="#e6e6e6"/><path d="M23 0.5 L23 8 L31 8" fill="#f4f4f4" stroke="#9a9a9a" stroke-width="1"/><circle cx="10" cy="13" r="6.5" fill="none" stroke="#5f7a94" stroke-width="4.5" stroke-dasharray="3 2.1"/><circle cx="10" cy="13" r="5.2" fill="#5f7a94"/><circle cx="10" cy="13" r="2.5" fill="#e6e6e6"/></svg>
<div class="a fn" style="left:119px;top:422px">DESCRIPTION</div>
<div class="a fs" style="left:528px;top:423px">893 B</div>
<div class="a fs" style="left:687px;top:423px">Sep 24, 2022, 8:09 PM</div>
<div class="a cb" style="left:23px;top:468px"></div>
<svg class="a" style="left:73px;top:465px;overflow:visible" width="32" height="30" viewBox="0 0 32 30"><defs><linearGradient id="fg" x1="0" y1="0" x2="0" y2="1"><stop offset="0" stop-color="#e2d8a0"/><stop offset="1" stop-color="#c9a450"/></linearGradient></defs><path d="M10 6 L16 2 L29 2 L31 5 L31 27 L10 27 Z" fill="#d6d6d6" stroke="#b8a060" stroke-width="1"/><path d="M1 9 L28 9 L28 28 L1 28 Z" fill="url(#fg)" stroke="#a98838" stroke-width="1.2"/></svg>
<div class="a fn" style="left:119px;top:468px">docs</div>
<div class="a cb" style="left:23px;top:514px"></div>
<svg class="a" style="left:73px;top:511px;overflow:visible" width="32" height="30" viewBox="0 0 32 30"><defs><linearGradient id="fg" x1="0" y1="0" x2="0" y2="1"><stop offset="0" stop-color="#e2d8a0"/><stop offset="1" stop-color="#c9a450"/></linearGradient></defs><path d="M10 6 L16 2 L29 2 L31 5 L31 27 L10 27 Z" fill="#d6d6d6" stroke="#b8a060" stroke-width="1"/><path d="M1 9 L28 9 L28 28 L1 28 Z" fill="url(#fg)" stroke="#a98838" stroke-width="1.2"/></svg>
<div class="a fn" style="left:119px;top:514px">inst</div>
<div class="a cb" style="left:23px;top:560px"></div>
<svg class="a" style="left:73px;top:557px;overflow:visible" width="32" height="30" viewBox="0 0 32 30"><path d="M6 0.5 L23 0.5 L31 8 L31 28.5 L6 28.5 Z" fill="#e6e6e6"/><path d="M23 0.5 L23 8 L31 8" fill="#f4f4f4" stroke="#9a9a9a" stroke-width="1"/></svg>
<div class="a fn" style="left:119px;top:560px">LICENSE</div>
<div class="a fs" style="left:528px;top:561px">45 B</div>
<div class="a fs" style="left:687px;top:561px">Apr 21, 2022, 4:42 PM</div>
<div class="a cb" style="left:23px;top:606px"></div>
<svg class="a" style="left:73px;top:603px;overflow:visible" width="32" height="30" viewBox="0 0 32 30"><path d="M6 0.5 L23 0.5 L31 8 L31 28.5 L6 28.5 Z" fill="#e6e6e6"/><path d="M23 0.5 L23 8 L31 8" fill="#f4f4f4" stroke="#9a9a9a" stroke-width="1"/><text x="-1" y="22.5" font-family="Liberation Sans" font-size="13.5" fill="#6f2290" textLength="21">MD</text></svg>
<div class="a fn" style="left:119px;top:606px">LICENSE.md</div>
<div class="a fs" style="left:528px;top:607px">1 KB</div>
<div class="a fs" style="left:687px;top:607px">Apr 21, 2022, 4:42 PM</div>
<div class="a cb" style="left:23px;top:652px"></div>
<svg class="a" style="left:73px;top:649px;overflow:visible" width="32" height="30" viewBox="0 0 32 30"><defs><linearGradient id="fg" x1="0" y1="0" x2="0" y2="1"><stop offset="0" stop-color="#e2d8a0"/><stop offset="1" stop-color="#c9a450"/></linearGradient></defs><path d="M10 6 L16 2 L29 2 L31 5 L31 27 L10 27 Z" fill="#d6d6d6" stroke="#b8a060" stroke-width="1"/><path d="M1 9 L28 9 L28 28 L1 28 Z" fill="url(#fg)" stroke="#a98838" stroke-width="1.2"/></svg>
<div class="a fn" style="left:119px;top:652px">man</div>
<div class="a cb" style="left:23px;top:698px"></div>
<svg class="a" style="left:73px;top:695px;overflow:visible" width="32" height="30" viewBox="0 0 32 30"><path d="M6 0.5 L23 0.5 L31 8 L31 28.5 L6 28.5 Z" fill="#e6e6e6"/><path d="M23 0.5 L23 8 L31 8" fill="#f4f4f4" stroke="#9a9a9a" stroke-width="1"/></svg>
<div class="a fn" style="left:119px;top:698px">NAMESPACE</div>
<div class="a fs" style="left:528px;top:699px">115 B</div>
<div class="a fs" style="left:687px;top:699px">Sep 24, 2022, 8:09 PM</div>
<div class="a cb" style="left:23px;top:744px"></div>
<svg class="a" style="left:73px;top:741px;overflow:visible" width="32" height="30" viewBox="0 0 32 30"><path d="M6 0.5 L23 0.5 L31 8 L31 28.5 L6 28.5 Z" fill="#e6e6e6"/><path d="M23 0.5 L23 8 L31 8" fill="#f4f4f4" stroke="#9a9a9a" stroke-width="1"/><text x="-1" y="22.5" font-family="Liberation Sans" font-size="13.5" fill="#6f2290" textLength="21">MD</text></svg>
<div class="a fn" style="left:119px;top:744px">NEWS.md</div>
<div class="a fs" style="left:528px;top:745px">199 B</div>
<div class="a fs" style="left:687px;top:745px">Sep 24, 2022, 4:57 PM</div>
<div class="a cb" style="left:23px;top:790px"></div>
<svg class="a" style="left:73px;top:787px;overflow:visible" width="32" height="30" viewBox="0 0 32 30"><defs><linearGradient id="fg" x1="0" y1="0" x2="0" y2="1"><stop offset="0" stop-color="#e2d8a0"/><stop offset="1" stop-color="#c9a450"/></linearGradient></defs><path d="M10 6 L16 2 L29 2 L31 5 L31 27 L10 27 Z" fill="#d6d6d6" stroke="#b8a060" stroke-width="1"/><path d="M1 9 L28 9 L28 28 L1 28 Z" fill="url(#fg)" stroke="#a98838" stroke-width="1.2"/></svg>
<div class="a fn" style="left:119px;top:790px">pkgdown</div>
    </div>
    <div class="a" style="left:943px;top:170px;width:32px;height:565px;background:#2a2a2a"></div>
    <div class="a" style="left:943px;top:735px;width:1.5px;height:227px;background:#2a2a2a"></div>
  </div>
</div>
</body></html>
